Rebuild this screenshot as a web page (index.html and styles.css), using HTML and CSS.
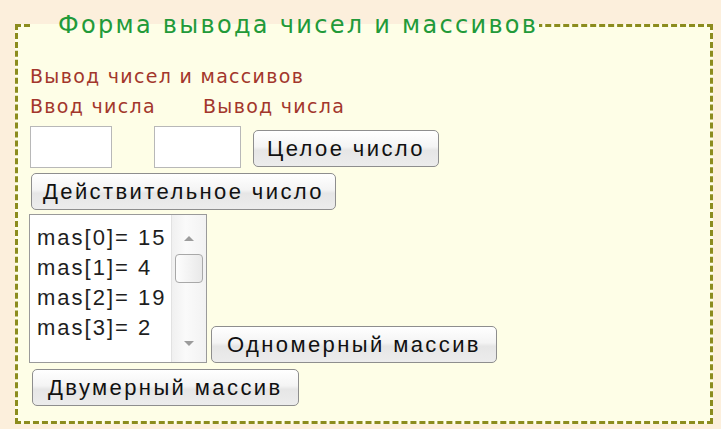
FILE: index.html
```html
<!DOCTYPE html>
<html lang="ru">
<head>
<meta charset="utf-8">
<title>Форма вывода чисел и массивов</title>
<link rel="stylesheet" href="styles.css">
</head>
<body>
<form class="panel">
  <fieldset class="frame">
    <legend class="frame-title">Форма вывода чисел и массивов</legend>
    <p class="caption">Вывод чисел и массивов</p>
    <div class="labels">
      <span class="label label-in">Ввод числа</span>
      <span class="label">Вывод числа</span>
    </div>
    <div class="row row-fields">
      <input class="field field-in" type="text">
      <input class="field field-out" type="text">
      <button class="btn btn-int" type="button">Целое число</button>
    </div>
    <div class="row">
      <button class="btn btn-real" type="button">Действительное число</button>
    </div>
    <div class="row row-list">
      <div class="listbox">
        <ul class="listbox-items">
          <li>mas[0]= 15</li>
          <li>mas[1]= 4</li>
          <li>mas[2]= 19</li>
          <li>mas[3]= 2</li>
        </ul>
        <div class="scrollbar">
          <span class="arrow arrow-up"></span>
          <span class="thumb"></span>
          <span class="arrow arrow-down"></span>
        </div>
      </div>
      <button class="btn btn-1d" type="button">Одномерный массив</button>
    </div>
    <div class="row">
      <button class="btn btn-2d" type="button">Двумерный массив</button>
    </div>
  </fieldset>
</form>
</body>
</html>
```

FILE: styles.css
```css
html, body {
  margin: 0;
  padding: 0;
}

body {
  background: #fcefdc;
  width: 721px;
  height: 429px;
  overflow: hidden;
}

.panel {
  padding: 12px 0 0 15px;
}

.frame {
  box-sizing: border-box;
  width: 698px;
  height: 412px;
  margin: 0;
  padding: 0 0 0 12px;
  border: 3px dashed #8c8c1e;
  background: #fefee7;
}

.frame-title {
  padding: 0 1px 0 28px;
  font-family: "DejaVu Sans", sans-serif;
  font-size: 24px;
  line-height: 27px;
  color: #229a39;
  letter-spacing: 2.3px;
}

.caption {
  margin: 0;
  padding-top: 25px;
  font-family: "DejaVu Sans", sans-serif;
  font-size: 19px;
  line-height: 24px;
  letter-spacing: 1.3px;
  color: #a3372c;
}

.labels {
  display: flex;
  padding-top: 6px;
  font-family: "DejaVu Sans", sans-serif;
  font-size: 19px;
  line-height: 24px;
  letter-spacing: 1.3px;
  color: #a3372c;
}

.label-in {
  width: 173px;
}

.row {
  display: flex;
  align-items: flex-end;
}

.row-fields {
  margin-top: 8px;
}

.field {
  box-sizing: border-box;
  height: 42px;
  margin: 0;
  border: 1px solid #b8b8b8;
  background: #fff;
}

.field-in {
  width: 82px;
}

.field-out {
  width: 87px;
  margin-left: 42px;
}

.btn {
  box-sizing: border-box;
  height: 37px;
  margin: 0;
  padding: 0 13px;
  border: 1px solid #8e8e8e;
  border-radius: 5px;
  background: linear-gradient(to bottom, #ffffff 0%, #f4f4f4 45%, #e6e6e6 55%, #ececec 100%);
  font-family: "Liberation Sans", Arial, sans-serif;
  font-size: 22px;
  letter-spacing: 2.4px;
  color: #111;
}

.btn-int {
  margin-left: 12px;
  margin-bottom: 1px;
}

.btn-real {
  margin-top: 5px;
  margin-left: 1px;
  padding: 0 11px;
}

.row-list {
  margin-top: 4px;
}

.listbox {
  box-sizing: border-box;
  display: flex;
  width: 178px;
  height: 149px;
  margin-left: -1px;
  border: 1px solid #9a9a9a;
  background: #fff;
}

.listbox-items {
  flex: 1;
  margin: 0;
  padding: 8px 0 0 7px;
  list-style: none;
  font-family: "Liberation Sans", Arial, sans-serif;
  font-size: 22px;
  line-height: 30px;
  letter-spacing: 2px;
  color: #1e1e1e;
}

.scrollbar {
  display: flex;
  flex-direction: column;
  align-items: center;
  width: 34px;
  border-left: 1px solid #e2e2e2;
  background: linear-gradient(to right, #f0f0f0, #fafafa 40%, #f2f2f2);
}

.arrow {
  width: 0;
  height: 0;
  border-left: 5px solid transparent;
  border-right: 5px solid transparent;
}

.arrow-up {
  margin-top: 21px;
  border-bottom: 5px solid #9c9c9c;
}

.thumb {
  box-sizing: border-box;
  width: 28px;
  height: 29px;
  margin-top: 13px;
  border: 1px solid #a8a8a8;
  border-radius: 4px;
  background: linear-gradient(to right, #fdfdfd, #e9e9e9);
}

.arrow-down {
  margin-top: auto;
  margin-bottom: 16px;
  border-top: 5px solid #9c9c9c;
}

.btn-1d {
  margin-left: 4px;
  padding: 0 15px;
}

.btn-2d {
  margin-top: 6px;
  margin-left: 2px;
  padding: 0 15px;
}
```
